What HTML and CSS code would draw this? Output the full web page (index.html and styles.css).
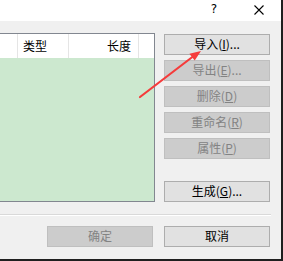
FILE: index.html
```html
<!DOCTYPE html>
<html>
<head>
<meta charset="utf-8">
<link rel="stylesheet" href="styles.css">
</head>
<body>
<div class="window">
  <div class="titlebar">
    <span class="help">?</span>
    <svg class="close" width="10" height="10" viewBox="0 0 10 10"><path d="M0.5 0.5 L9.5 9.5 M9.5 0.5 L0.5 9.5" stroke="#000" stroke-width="1.1" fill="none"/></svg>
  </div>
  <div class="content">
    <div class="main">
      <div class="listbox">
        <div class="header">
          <div class="col c1"></div>
          <div class="col c2">类型</div>
          <div class="col c3">长度</div>
          <div class="col c4"></div>
        </div>
        <div class="body"></div>
      </div>
      <div class="buttons">
        <div class="btn">导入(<u>I</u>)...</div>
        <div class="btn disabled">导出(<u>E</u>)...</div>
        <div class="btn disabled">删除(<u>D</u>)</div>
        <div class="btn disabled">重命名(<u>R</u>)</div>
        <div class="btn disabled">属性(<u>P</u>)</div>
        <div class="btn gen">生成(<u>G</u>)...</div>
      </div>
    </div>
    <div class="sep"></div>
    <div class="footer">
      <div class="btn disabled">确定</div>
      <div class="btn">取消</div>
    </div>
  </div>
  <svg class="arrow" width="283" height="261" viewBox="0 0 283 261">
    <line x1="140" y1="97" x2="193" y2="56.5" stroke="#f53b3b" stroke-width="2.2" stroke-linecap="round"/>
    <polygon points="201,51 189.4,53.7 194.7,60.6" fill="#f53b3b"/>
  </svg>
</div>
</body>
</html>
```
FILE: styles.css
```css
html, body {
  margin: 0;
  padding: 0;
}
body {
  width: 283px;
  height: 261px;
  overflow: hidden;
  font-family: "Noto Sans CJK SC", "Microsoft YaHei", sans-serif;
  font-size: 12px;
  color: #000;
}
.window {
  position: relative;
  width: 283px;
  height: 261px;
  box-sizing: border-box;
  background: #f0f0f0;
  border-right: 2px solid #1f1f1f;
  border-bottom: 2px solid #1f1f1f;
}
.titlebar {
  height: 21px;
  background: #fff;
  display: flex;
  align-items: flex-start;
  justify-content: flex-end;
}
.help {
  font-family: "DejaVu Sans", sans-serif;
  font-size: 12px;
  line-height: 12px;
  margin-top: 3px;
  margin-right: 37px;
}
.close {
  margin-top: 5px;
  margin-right: 17px;
}
.content {
  display: flex;
  flex-direction: column;
}
.main {
  display: flex;
  align-items: flex-start;
}
.listbox {
  margin-top: 12px;
  width: 155px;
  height: 169px;
  box-sizing: border-box;
  border: 1px solid #828790;
  border-left: none;
  display: flex;
  flex-direction: column;
}
.header {
  height: 24px;
  background: #fff;
  display: flex;
  flex: none;
}
.col {
  box-sizing: border-box;
  border-right: 1px solid #e5e5e5;
  line-height: 24px;
}
.c1 { width: 18px; }
.c2 { width: 51px; padding-left: 5px; }
.c3 { width: 70px; text-align: right; padding-right: 7px; }
.c4 { flex: 1; border-right: none; }
.body {
  flex: 1;
  background: #cce8cf;
}
.buttons {
  margin-top: 13px;
  margin-left: 9px;
  display: flex;
  flex-direction: column;
  gap: 5px;
}
.btn {
  width: 106px;
  height: 21px;
  box-sizing: border-box;
  border: 1px solid #adadad;
  background: #e1e1e1;
  text-align: center;
  line-height: 18px;
}
.btn u {
  text-decoration-thickness: 1px;
  text-underline-offset: 1px;
}
.btn.disabled {
  background: #cccccc;
  border-color: #bfbfbf;
  color: #838383;
}
.btn.gen {
  margin-top: 17px;
}
.sep {
  margin-top: 12px;
  width: 271px;
  height: 1px;
  background: #d9d9d9;
  border-bottom: 1px solid #fff;
}
.footer {
  margin-top: 10px;
  display: flex;
  justify-content: flex-end;
  gap: 11px;
  padding-right: 11px;
}
.arrow {
  position: absolute;
  left: 0;
  top: 0;
  pointer-events: none;
}
```
